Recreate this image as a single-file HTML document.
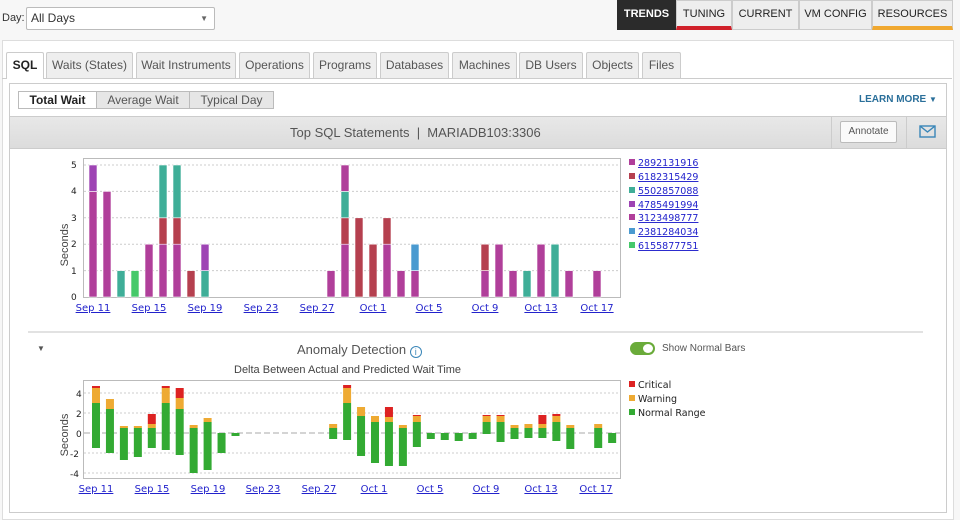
<!DOCTYPE html>
<html><head><meta charset="utf-8"><style>
*{box-sizing:border-box;margin:0;padding:0}
body{width:960px;height:513px;background:#f7f7f7;font-family:"Liberation Sans",sans-serif;font-size:12px;color:#333;position:relative;overflow:hidden}
.a{position:absolute}
.tab{position:absolute;top:52px;height:26px;border:1px solid #ccc;border-bottom:none;background:#eee;color:#555;font-size:12px;line-height:25px;text-align:center;border-radius:2px 2px 0 0}
.nav{position:absolute;top:0;height:30px;font-size:11px;line-height:26px;text-align:center;background:#eee;border:1px solid #ccc;color:#222}
.seg{position:absolute;top:91px;height:18px;border:1px solid #bbb;background:#e6e6e6;font-size:12px;line-height:16px;text-align:center;color:#555}
svg text{font-family:"DejaVu Sans",sans-serif}
</style></head><body>
<div class="a" style="left:2px;top:12px;font-size:11px">Day:</div>
<div class="a" style="left:26px;top:7px;width:189px;height:23px;background:#fff;border:1px solid #bbb;border-radius:2px;font-size:12px;line-height:21px;padding-left:4px">All Days<span style="position:absolute;right:6px;top:0;font-size:8px;color:#666">▼</span></div>
<div class="nav" style="left:617px;width:59px;background:#2b2b2b;color:#fff;font-weight:bold;border-color:#2b2b2b">TRENDS</div>
<div class="nav" style="left:676px;width:56px;border-bottom:4px solid #d0202a">TUNING</div>
<div class="nav" style="left:732px;width:67px">CURRENT</div>
<div class="nav" style="left:799px;width:73px">VM CONFIG</div>
<div class="nav" style="left:872px;width:81px;border-bottom:4px solid #f0a830">RESOURCES</div>
<div class="a" style="left:2px;top:40px;width:952px;height:480px;background:#fff;border:1px solid #ddd"></div>
<div class="a" style="left:2px;top:78px;width:950px;height:1px;background:#ccc"></div>
<div class="tab" style="left:6px;width:38px;background:#fff;color:#222;font-weight:bold;height:27px">SQL</div>
<div class="tab" style="left:46px;width:87px">Waits (States)</div>
<div class="tab" style="left:136px;width:100px">Wait Instruments</div>
<div class="tab" style="left:239px;width:71px">Operations</div>
<div class="tab" style="left:313px;width:64px">Programs</div>
<div class="tab" style="left:380px;width:69px">Databases</div>
<div class="tab" style="left:452px;width:65px">Machines</div>
<div class="tab" style="left:519px;width:64px">DB Users</div>
<div class="tab" style="left:586px;width:53px">Objects</div>
<div class="tab" style="left:642px;width:39px">Files</div>
<div class="a" style="left:9px;top:83px;width:938px;height:430px;border:1px solid #ccc;background:#fff"></div>
<div class="seg" style="left:18px;width:79px;background:#fff;color:#222;font-weight:bold">Total Wait</div>
<div class="seg" style="left:96px;width:94px">Average Wait</div>
<div class="seg" style="left:189px;width:85px">Typical Day</div>
<div class="a" style="left:859px;top:94px;font-size:10px;font-weight:bold;color:#2a6f9a">LEARN MORE <span style="font-size:8px">▼</span></div>
<div class="a" style="left:10px;top:116px;width:936px;height:33px;background:linear-gradient(#e8e8e8,#dcdcdc);border-top:1px solid #ccc;border-bottom:1px solid #ccc"></div>
<div class="a" style="left:290px;top:125px;font-size:13px;color:#555">Top SQL Statements &nbsp;|&nbsp; MARIADB103:3306</div>
<div class="a" style="left:831px;top:116px;width:1px;height:33px;background:#ccc"></div>
<div class="a" style="left:906px;top:116px;width:1px;height:33px;background:#ccc"></div>
<div class="a" style="left:840px;top:121px;width:57px;height:22px;background:#fafafa;border:1px solid #bbb;border-radius:2px;font-size:10px;line-height:20px;text-align:center;color:#555">Annotate</div>
<svg class="a" style="left:919px;top:125px" width="17" height="13"><rect x="1" y="1" width="15" height="11" fill="none" stroke="#3a86b8" stroke-width="1.4"/><path d="M1 1L8.5 7L16 1" fill="none" stroke="#3a86b8" stroke-width="1.4"/></svg>

<svg class="a" style="left:0;top:150px" width="960" height="180" id="c1">
<g font-size="9" fill="#222">
<text x="71" y="18">5</text><text x="71" y="44">4</text><text x="71" y="71">3</text><text x="71" y="97">2</text><text x="71" y="124">1</text><text x="71" y="150">0</text>
</g>
<text x="68" y="95" font-size="11" fill="#444" transform="rotate(-90 68 95)" text-anchor="middle" style="font-family:'Liberation Sans'">Seconds</text>
<g font-size="10" fill="#2222cc" text-decoration="underline" text-anchor="middle" style="font-family:'Liberation Sans'">
<text x="93" y="161">Sep 11</text><text x="149" y="161">Sep 15</text><text x="205" y="161">Sep 19</text><text x="261" y="161">Sep 23</text><text x="317" y="161">Sep 27</text><text x="373" y="161">Oct 1</text><text x="429" y="161">Oct 5</text><text x="485" y="161">Oct 9</text><text x="541" y="161">Oct 13</text><text x="597" y="161">Oct 17</text>
</g>
<g font-size="9.5" fill="#2222cc" text-decoration="underline">
<text x="638" y="16">2892131916</text><text x="638" y="30">6182315429</text><text x="638" y="44">5502857088</text><text x="638" y="58">4785491994</text><text x="638" y="71">3123498777</text><text x="638" y="85">2381284034</text><text x="638" y="99">6155877751</text>
</g>
<rect x="629" y="9" width="6" height="6" fill="#b03f9a"/><rect x="629" y="23" width="6" height="6" fill="#b5404f"/><rect x="629" y="37" width="6" height="6" fill="#3fae98"/><rect x="629" y="51" width="6" height="6" fill="#9e44b4"/><rect x="629" y="64" width="6" height="6" fill="#b03f9a"/><rect x="629" y="78" width="6" height="6" fill="#4a9ad0"/><rect x="629" y="92" width="6" height="6" fill="#46c96a"/>
</svg>

<div class="a" style="left:28px;top:331px;width:895px;height:2px;background:#e2e2e2"></div>
<div class="a" style="left:37px;top:344px;font-size:8px;color:#555">▼</div>
<div class="a" style="left:297px;top:342px;font-size:13px;color:#555">Anomaly Detection <span style="display:inline-block;width:12px;height:12px;border:1px solid #3a86b8;border-radius:50%;font-size:9px;line-height:10px;text-align:center;color:#3a86b8;vertical-align:-1px">i</span></div>
<div class="a" style="left:630px;top:342px;width:25px;height:13px;border-radius:7px;background:#6aab3a"></div>
<div class="a" style="left:643px;top:344px;width:10px;height:9px;border-radius:50%;background:#fff"></div>
<div class="a" style="left:662px;top:343px;font-size:10px;color:#555">Show Normal Bars</div>
<div class="a" style="left:234px;top:364px;font-size:11px;color:#444">Delta Between Actual and Predicted Wait Time</div>

<svg class="a" style="left:0;top:375px" width="960" height="130" id="c2">
<g font-size="9" fill="#222">
<text x="76" y="22">4</text><text x="76" y="42">2</text><text x="76" y="62">0</text><text x="70" y="82">-2</text><text x="70" y="102">-4</text>
</g>
<text x="68" y="60" font-size="11" fill="#444" transform="rotate(-90 68 60)" text-anchor="middle" style="font-family:'Liberation Sans'">Seconds</text>
<g font-size="10" fill="#2222cc" text-decoration="underline" text-anchor="middle" style="font-family:'Liberation Sans'">
<text x="96" y="117">Sep 11</text><text x="152" y="117">Sep 15</text><text x="208" y="117">Sep 19</text><text x="263" y="117">Sep 23</text><text x="319" y="117">Sep 27</text><text x="374" y="117">Oct 1</text><text x="430" y="117">Oct 5</text><text x="486" y="117">Oct 9</text><text x="541" y="117">Oct 13</text><text x="596" y="117">Oct 17</text>
</g>
<g font-size="9.5" fill="#222">
<text x="638" y="13">Critical</text><text x="638" y="27">Warning</text><text x="638" y="41">Normal Range</text>
</g>
<rect x="629" y="6" width="6" height="6" fill="#dd2222"/><rect x="629" y="20" width="6" height="6" fill="#eeaa33"/><rect x="629" y="34" width="6" height="6" fill="#33aa33"/>
</svg>

<script>
var NS="http://www.w3.org/2000/svg";
function r(s,x,y,w,h,f,st){var e=document.createElementNS(NS,"rect");e.setAttribute("x",x);e.setAttribute("y",y);e.setAttribute("width",w);e.setAttribute("height",h);e.setAttribute("fill",f);if(st){e.setAttribute("stroke",st);e.setAttribute("stroke-width",1)}s.appendChild(e);return e}
function l(s,x1,y1,x2,y2,c,d){var e=document.createElementNS(NS,"line");e.setAttribute("x1",x1);e.setAttribute("y1",y1);e.setAttribute("x2",x2);e.setAttribute("y2",y2);e.setAttribute("stroke",c);if(d)e.setAttribute("stroke-dasharray",d);s.appendChild(e)}
var c1=document.getElementById("c1");
r(c1,83.5,8.5,537,139,"#fff","#bbb");
for(var i=1;i<=5;i++)l(c1,84,147-i*26.4,620,147-i*26.4,"#ccc","2,2");
var M="#b03f9a",R="#b5404f",T="#3fae98",P="#9e44b4",B="#4a9ad0",G="#46c96a";
var d1={0:[[M,4],[P,1]],1:[[M,4]],2:[[T,1]],3:[[G,1]],4:[[M,2]],5:[[M,2],[R,1],[T,2]],6:[[M,2],[R,1],[T,2]],7:[[R,1]],8:[[T,1],[P,1]],17:[[M,1]],18:[[M,2],[R,1],[T,1],[M,1]],19:[[R,3]],20:[[R,2]],21:[[M,2],[R,1]],22:[[M,1]],23:[[M,1],[B,1]],28:[[M,1],[R,1]],29:[[M,2]],30:[[M,1]],31:[[T,1]],32:[[M,2]],33:[[T,2]],34:[[M,1]],36:[[M,1]]};
for(var k in d1){var x=93+14*k-4,y=147;d1[k].forEach(function(s){var h=s[1]*26.4;y-=h;var e=r(c1,x,y,8,h,s[0]);e.setAttribute("stroke","#fff");e.setAttribute("stroke-width","0.6")})}
var c2=document.getElementById("c2");
r(c2,83.5,5.5,537,98,"#fff","#bbb");
[-4,-2,2,4].forEach(function(v){l(c2,84,58-v*10,620,58-v*10,"#ccc","2,2")});
l(c2,84,58,620,58,"#aaa","6,3");
var d2={0:[-1.5,3,4.5,4.7],1:[-2,2.4,3.4],2:[-2.7,.5,.7],3:[-2.4,.5,.7],4:[-1.5,.5,.9,1.9],5:[-1.7,3,4.5,4.7],6:[-2.2,2.4,3.5,4.5],7:[-4,.5,.8],8:[-3.7,1.1,1.5],9:[-2,0],10:[-.3,0],17:[-.6,.5,.9],18:[-.7,3,4.5,4.8],19:[-2.3,1.7,2.6],20:[-3,1.1,1.7],21:[-3.3,1.1,1.6,2.6],22:[-3.3,.5,.8],23:[-1.4,1.1,1.7,1.8],24:[-.6,0],25:[-.7,0],26:[-.8,0],27:[-.6,0],28:[-.1,1.1,1.7,1.8],29:[-.9,1.1,1.7,1.8],30:[-.6,.5,.8],31:[-.5,.5,.9],32:[-.5,.5,.9,1.8],33:[-.8,1.1,1.7,1.9],34:[-1.6,.5,.8],36:[-1.5,.5,.9],37:[-1,0]};
for(var k in d2){var v=d2[k],x=96+13.95*k-4;
r(c2,x,58-v[1]*10,8,(v[1]-v[0])*10,"#33aa33");
if(v.length>2)r(c2,x,58-v[2]*10,8,(v[2]-v[1])*10,"#eeaa33");
if(v.length>3)r(c2,x,58-v[3]*10,8,(v[3]-v[2])*10,"#dd2222");}
</script>
</body></html>
